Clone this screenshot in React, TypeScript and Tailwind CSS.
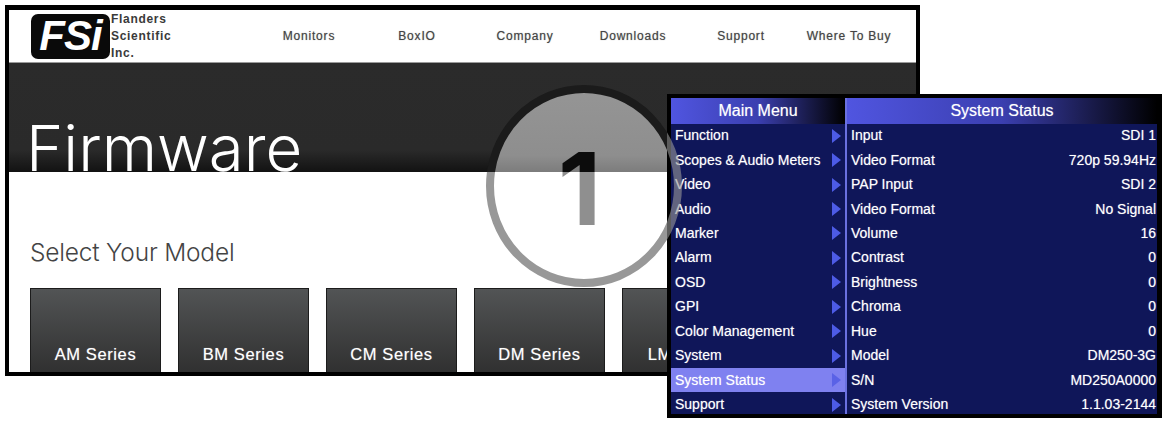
import React from 'react';

const navLinks = ['Monitors', 'BoxIO', 'Company', 'Downloads', 'Support', 'Where To Buy'];
const series = ['AM Series', 'BM Series', 'CM Series', 'DM Series', 'LM Series'];

const menuItems = [
  'Function', 'Scopes & Audio Meters', 'Video', 'Audio', 'Marker', 'Alarm',
  'OSD', 'GPI', 'Color Management', 'System', 'System Status', 'Support',
];

const statusRows = [
  ['Input', 'SDI 1'],
  ['Video Format', '720p 59.94Hz'],
  ['PAP Input', 'SDI 2'],
  ['Video Format', 'No Signal'],
  ['Volume', '16'],
  ['Contrast', '0'],
  ['Brightness', '0'],
  ['Chroma', '0'],
  ['Hue', '0'],
  ['Model', 'DM250-3G'],
  ['S/N', 'MD250A0000'],
  ['System Version', '1.1.03-2144'],
];

const StepBadge = () => (
  <svg className="absolute left-0 top-0 pointer-events-none" width="1167" height="422">
    <defs>
      <clipPath id="overDark"><rect x="0" y="0" width="667" height="172" /></clipPath>
      <clipPath id="overWhite"><rect x="0" y="172" width="667" height="250" /></clipPath>
      <clipPath id="overMenu"><rect x="667" y="0" width="100" height="422" /></clipPath>
      <linearGradient id="discFill" gradientUnits="userSpaceOnUse" x1="0" y1="90" x2="0" y2="172">
        <stop offset="0" stopColor="#959595" />
        <stop offset="0.8" stopColor="#8e8e8e" />
        <stop offset="1" stopColor="#7c7c7c" />
      </linearGradient>
    </defs>
    <g clipPath="url(#overDark)">
      <ellipse cx="584" cy="186" rx="94" ry="97" fill="url(#discFill)" stroke="#1b1b1b" strokeWidth="8" />
      <text x="601" y="225" textAnchor="end" fontFamily="Inter, sans-serif" fontWeight="700" fontSize="100" fill="#0c0c0c">1</text>
    </g>
    <g clipPath="url(#overWhite)">
      <ellipse cx="584" cy="186" rx="94" ry="97" fill="none" stroke="#989898" strokeWidth="8" />
      <text x="601" y="225" textAnchor="end" fontFamily="Inter, sans-serif" fontWeight="700" fontSize="100" fill="#8f8f8f">1</text>
    </g>
    <g clipPath="url(#overMenu)">
      <ellipse cx="584" cy="186" rx="94" ry="97" fill="none" stroke="#9a9a9a" strokeOpacity="0.6" strokeWidth="8" />
    </g>
  </svg>
);

export default function App() {
  return (
    <div className="relative w-[1167px] h-[422px] overflow-hidden bg-white font-['Liberation_Sans',sans-serif]">
      {/* Website frame */}
      <div className="ml-[5px] mt-[5px] w-[915px] h-[371px] border-x-[4px] border-t-[5px] border-b-[4px] border-black flex flex-col overflow-hidden">
        <header className="h-[53px] shrink-0 bg-white border-b border-[#9a9a9a] flex items-center pl-[22px]">
          <div className="w-[79px] h-[45px] rounded-[7px] bg-[#0a0a0a] flex items-center justify-center">
            <span className="text-white italic font-bold text-[42px] leading-none tracking-[-1px]">FSi</span>
          </div>
          <div className="w-[145px] pl-px text-[12px] leading-[17px] font-bold text-[#3a3a3a] tracking-[0.7px]">
            <div>Flanders</div>
            <div>Scientific</div>
            <div>Inc.</div>
          </div>
          <nav className="grid grid-cols-[repeat(6,108px)] text-center text-[12px] text-[#444] tracking-[0.8px] [text-shadow:0_0_1px_rgba(60,60,60,0.5)]">
            {navLinks.map(link => (
              <span key={link}>{link}</span>
            ))}
          </nav>
        </header>

        <div className="h-[109px] shrink-0 flex items-end pl-[17px] bg-[linear-gradient(to_bottom,#2b2b2b_0%,#2a2a2a_80%,#121212_100%)]">
          <h1 className="font-['Inter',sans-serif] font-light text-[63.5px] leading-[48px] text-white">Firmware</h1>
        </div>

        <main className="flex-1 bg-white pl-[21px] overflow-hidden">
          <h2 className="pt-[62px] font-['Inter',sans-serif] font-light text-[24.5px] leading-[36px] tracking-[-0.2px] text-[#444]">Select Your Model</h2>
          <div className="mt-[18px] flex gap-[17px]">
            {series.map(name => (
              <div key={name} className="w-[131px] h-[90px] shrink-0 border-x border-t border-[#1c1c1c] bg-[linear-gradient(to_bottom,#525455,#2e2e2e)] flex justify-center pt-[54px]">
                <span className="text-white text-[16.5px] leading-[22px] tracking-[0.6px] [text-shadow:0_0_1px_rgba(255,255,255,0.5)]">{name}</span>
              </div>
            ))}
          </div>
        </main>
      </div>

      {/* Monitor menu overlay */}
      <div className="absolute left-[667px] top-[94px] w-[495px] h-[324px] bg-black pl-[4px] pr-[5px] pt-[4px] pb-[4px] flex text-white text-[14px] [text-shadow:0_0_1px_rgba(255,255,255,0.5)]">
        <div className="w-[174px] shrink-0 flex flex-col">
          <div className="h-[25.5px] shrink-0 flex items-center justify-center text-[16px] bg-[linear-gradient(to_right,#5055e0,#3b3fb0_50%,#000_100%)]">Main Menu</div>
          <div className="flex-1 overflow-hidden bg-[#0f1659]">
            {menuItems.map(item => {
              const isActive = item === 'System Status';
              return (
                <div key={item} className={`h-[24.45px] flex items-center justify-between pl-[4px] pr-[4px] ${isActive ? 'bg-[#7f81f0]' : ''}`}>
                  <span>{item}</span>
                  <svg width="9" height="14" viewBox="0 0 9 14">
                    <path d="M0 0 L9 7 L0 14 Z" fill={isActive ? '#5a62e6' : '#4d5be6'} />
                  </svg>
                </div>
              );
            })}
          </div>
        </div>
        <div className="w-[2px] shrink-0 bg-[#6a70e0]" />
        <div className="flex-1 flex flex-col">
          <div className="h-[25.5px] shrink-0 flex items-center justify-center text-[16px] bg-[linear-gradient(to_right,#5055e0,#3b3fb0_50%,#000_100%)]">System Status</div>
          <div className="flex-1 overflow-hidden bg-[#0f1659]">
            {statusRows.map(([label, value], i) => (
              <div key={i} className="h-[24.45px] flex items-center justify-between pl-[4px] pr-px">
                <span>{label}</span>
                <span>{value}</span>
              </div>
            ))}
          </div>
        </div>
      </div>

      <StepBadge />
    </div>
  );
}
